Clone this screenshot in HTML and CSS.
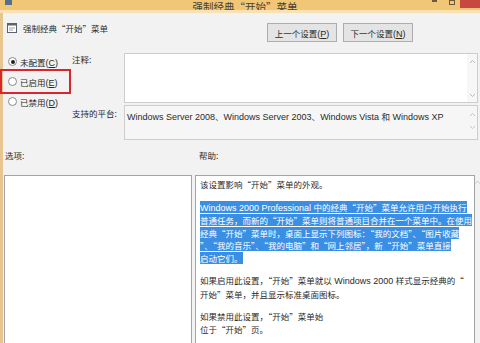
FILE: index.html
```html
<!DOCTYPE html>
<html>
  <head>
    <title>强制经典“开始”菜单</title>
    <link rel="stylesheet" href="styles.css">
  </head>
  <body>
    <div class="window">
      <div class="titlebar">
        <span class="app-icon"></span>
        <span class="title">强制经典“开始”菜单</span>
        <span class="caption">
          <span class="cap-min"></span>
          <span class="cap-max"></span>
          <span class="cap-close"></span>
        </span>
      </div>
      <div class="frame">
        <div class="head">
          <div class="policy-name">
            <svg class="policy-icon" width="10" height="10" viewBox="0 0 10 10">
              <rect x="0.5" y="0.5" width="9" height="9" fill="#fff" stroke="#5a6470"/>
              <rect x="0.5" y="0.5" width="9" height="2" fill="#5a6470"/>
              <line x1="2" y1="5" x2="8" y2="5" stroke="#9aa4ae"/>
              <line x1="2" y1="7" x2="6" y2="7" stroke="#9aa4ae"/>
            </svg>
            <span>强制经典“开始”菜单</span>
          </div>
          <div class="nav">
            <button class="btn">上一个设置<span class="en">(<u>P</u>)</span></button>
            <button class="btn">下一个设置<span class="en">(<u>N</u>)</span></button>
          </div>
        </div>

        <div class="settings">
          <div class="radios">
            <label class="radio"><span class="dot checked"></span><span>未配置<span class="en">(<u>C</u>)</span></span></label>
            <label class="radio"><span class="dot"></span><span>已启用<span class="en">(<u>E</u>)</span></span></label>
            <label class="radio"><span class="dot"></span><span>已禁用<span class="en">(<u>D</u>)</span></span></label>
          </div>
          <div class="label label-note">注释:</div>
          <div class="box note">
            <div class="box-text"></div>
            <div class="scroll">
              <svg width="7" height="5" viewBox="0 0 7 5"><path d="M1 4 L3.5 1.5 L6 4" fill="none" stroke="#b8b8b8"/></svg>
              <svg width="7" height="5" viewBox="0 0 7 5"><path d="M1 1 L3.5 3.5 L6 1" fill="none" stroke="#b8b8b8"/></svg>
            </div>
          </div>
          <div class="label label-platform">支持的平台:</div>
          <div class="box platform">
            <div class="box-text"><span class="en">Windows Server 2008</span>、<span class="en">Windows Server 2003</span>、<span class="en">Windows Vista </span>和<span class="en"> Windows XP</span></div>
            <div class="scroll">
              <svg width="7" height="5" viewBox="0 0 7 5"><path d="M1 4 L3.5 1.5 L6 4" fill="none" stroke="#c4c4c4"/></svg>
              <svg width="7" height="5" viewBox="0 0 7 5"><path d="M1 1 L3.5 3.5 L6 1" fill="none" stroke="#c4c4c4"/></svg>
            </div>
          </div>
        </div>

        <div class="pane-labels">
          <span class="options-label">选项:</span>
          <span>帮助:</span>
        </div>

        <div class="panes">
          <div class="options"></div>
          <div class="help">
            <p>该设置影响“开始”菜单的外观。</p>
            <p><span class="selected"><span class="en">Windows 2000 Professional </span>中的经典“开始”菜单允许用户开始执行<br>普通任务，而新的“开始”菜单则将普通项目合并在一个菜单中。在使用<br>经典“开始”菜单时，桌面上显示下列图标：“我的文档”、“图片收藏<br>”、“我的音乐”、“我的电脑”和“网上邻居”，新“开始”菜单直接<br>启动它们。</span></p>
            <p>如果启用此设置，“开始”菜单就以<span class="en"> Windows 2000 </span>样式显示经典的“<br>开始”菜单，并且显示标准桌面图标。</p>
            <p>如果禁用此设置，“开始”菜单始<br>位于“开始”页。</p>
          </div>
          <div class="help-scroll">
            <svg width="5" height="4" viewBox="0 0 5 4"><path d="M0.5 3.5 L2.5 1 L4.5 3.5" fill="none" stroke="#c8c8c8"/></svg>
          </div>
        </div>
      </div>
      <div class="mark"></div>
    </div>
  </body>
</html>
```

FILE: styles.css
```css
body {
  margin: 0;
  font-family: "Noto Sans CJK SC", "Liberation Sans", sans-serif;
  font-size: 8.5px;
  color: #2a2a2a;
  background: #f0f0f0;
}
.en {
  font-family: "Liberation Sans", sans-serif;
  font-size: 9px;
}
.window {
  position: relative;
  width: 480px;
  height: 343px;
  overflow: hidden;
  display: flex;
  flex-direction: column;
}
.titlebar {
  height: 10px;
  flex: none;
  background-color: #f1c676;
  border-bottom: 3px solid #f8e2b4;
  display: grid;
  grid-template-columns: 1fr auto 1fr;
  align-items: end;
  overflow: hidden;
}
.app-icon {
  align-self: start;
  width: 7px;
  height: 5px;
  margin-left: 5px;
  background-color: #55708f;
}
.title {
  font-size: 10.5px;
  line-height: 14px;
  color: #4a3f30;
  margin-left: 10px;
}
.caption {
  align-self: start;
  justify-self: end;
  display: flex;
  align-items: flex-start;
}
.cap-min {
  width: 5px;
  height: 2px;
  background-color: #6d5a3a;
  margin-right: 12px;
}
.cap-max {
  width: 4px;
  height: 3px;
  border: 1px solid #6d5a3a;
  margin-right: 5px;
}
.cap-close {
  width: 20px;
  height: 8px;
  background-color: #c8473e;
}
.frame {
  flex: 1;
  border-left: 3px solid #e6c68e;
  background-color: #f2f2f2;
  display: flex;
  flex-direction: column;
}
.head {
  display: flex;
  align-items: flex-start;
  padding-top: 10px;
  height: 19px;
}
.policy-name {
  display: flex;
  align-items: center;
  gap: 6px;
  padding-left: 4px;
  line-height: 10px;
}
.nav {
  margin-left: auto;
  margin-right: 67px;
  display: flex;
  gap: 6px;
}
.btn {
  width: 70px;
  height: 19px;
  padding: 0;
  font-family: inherit;
  font-size: 8.5px;
  color: #2a2a2a;
  background-color: #e4e4e4;
  border: 1px solid #adadad;
}
.settings {
  margin-top: 11px;
  display: grid;
  grid-template-columns: 69px 52px 354px;
  grid-template-rows: 50px 35px;
  row-gap: 2px;
}
.radios {
  grid-row: 1 / 3;
  grid-column: 1;
  display: flex;
  flex-direction: column;
  gap: 7px;
  padding-top: 2px;
}
.radio {
  display: flex;
  align-items: center;
  gap: 3px;
  height: 13px;
  padding-left: 5px;
}
.dot {
  width: 7px;
  height: 7px;
  border: 1px solid #8a8a8a;
  border-radius: 50%;
  background-color: #fff;
  display: flex;
  align-items: center;
  justify-content: center;
}
.dot.checked::after {
  content: "";
  width: 4px;
  height: 4px;
  border-radius: 50%;
  background-color: #222;
}
.label {
  grid-column: 2;
  line-height: 12px;
}
.label-platform {
  padding-top: 2px;
}
.box {
  grid-column: 3;
  display: flex;
  border: 1px solid #cdcdcd;
}
.note {
  background-color: #fff;
}
.platform {
  background-color: #f6f6f6;
}
.box-text {
  flex: 1;
  padding: 4px 2px;
  line-height: 12px;
  white-space: nowrap;
  overflow: hidden;
}
.scroll {
  width: 10px;
  display: flex;
  flex-direction: column;
  justify-content: space-between;
  align-items: center;
  padding: 5px 0 4px;
  background-color: #f7f7f7;
}
.platform .scroll {
  padding: 6px 0 9px;
  background-color: transparent;
}
.pane-labels {
  display: flex;
  margin-top: 9px;
  line-height: 12px;
  padding-left: 2px;
}
.options-label {
  width: 194px;
}
.panes {
  margin-top: 14px;
  flex: 1;
  display: flex;
  padding-left: 1px;
}
.options {
  width: 186px;
  border: 1px solid #a4a4a4;
  background-color: #fff;
}
.help {
  width: 270px;
  margin-left: 3px;
  border: 1px solid #a4a4a4;
  background-color: #fff;
  padding: 2px 4px;
  line-height: 12.5px;
  white-space: nowrap;
  overflow: hidden;
}
.help p {
  margin: 0 0 10px;
}
.selected {
  background-color: #3a8fe4;
  color: #fff;
}
.help-scroll {
  width: 5px;
  display: flex;
  justify-content: center;
  padding-top: 5px;
}
.mark {
  position: absolute;
  left: 0;
  top: 69px;
  width: 67px;
  height: 21px;
  border: 2.5px solid #d7262d;
}
```
